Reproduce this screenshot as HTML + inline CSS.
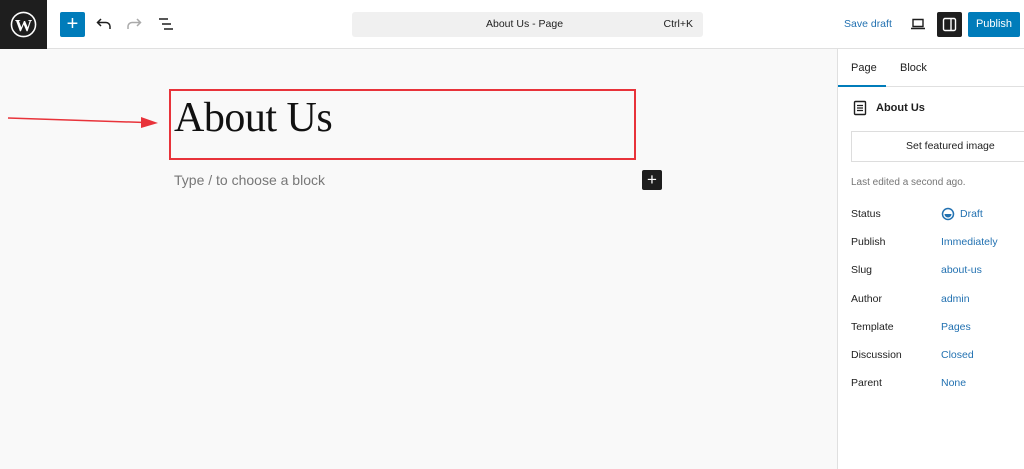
<!DOCTYPE html>
<html><head><meta charset="utf-8"><style>
*{box-sizing:border-box;margin:0;padding:0}
body{width:1024px;height:469px;overflow:hidden;background:#f9f9f9;font-family:"Liberation Sans",sans-serif;font-size:11px;color:#1e1e1e;position:relative}
.top{position:absolute;left:0;top:0;width:1024px;height:49px;background:#fff;border-bottom:1px solid #e0e0e0}
.abs{position:absolute}
.side{position:absolute;left:837px;top:49px;width:187px;height:420px;background:#fff;border-left:1px solid #e0e0e0}
.lbl{position:absolute;left:13px;font-size:10.5px;color:#1e1e1e}
.val{position:absolute;left:103px;font-size:10.5px;color:#2271b1}
</style></head><body>
<div class="top">
 <div class="abs" style="left:0;top:0;width:47px;height:49px;background:#1e1e1e">
  <svg class="abs" style="left:10px;top:11px" width="27" height="27" viewBox="0 0 28 28"><circle cx="14" cy="14" r="12.5" fill="none" stroke="#fff" stroke-width="1.6"/><text x="14" y="20.5" font-family="Liberation Serif" font-weight="bold" font-size="18" fill="#fff" text-anchor="middle">W</text></svg>
 </div>
 <div class="abs" style="left:60px;top:12px;width:25px;height:25px;background:#007cba;border-radius:2px;color:#fff;font-size:20px;line-height:24px;text-align:center">+</div>
 <svg class="abs" style="left:95px;top:15px" width="18" height="18" viewBox="0 0 18 18"><path d="M6 4L2.5 7.5L6 11M3 7.5H11a4 4 0 0 1 4 4V14" fill="none" stroke="#1e1e1e" stroke-width="1.5"/></svg>
 <svg class="abs" style="left:125px;top:15px" width="18" height="18" viewBox="0 0 18 18"><path d="M12 4L15.5 7.5L12 11M15 7.5H7a4 4 0 0 0-4 4V14" fill="none" stroke="#aaa" stroke-width="1.5"/></svg>
 <svg class="abs" style="left:157px;top:16px" width="18" height="16" viewBox="0 0 18 16"><path d="M2 3h9M5 8h9M7 13h9" stroke="#1e1e1e" stroke-width="1.5"/></svg>
 <div class="abs" style="left:352px;top:12px;width:351px;height:25px;background:#f0f0f0;border-radius:3px;font-size:10.5px;line-height:25px">
  <span class="abs" style="left:134px">About Us - Page</span><span class="abs" style="right:10px">Ctrl+K</span></div>
 <div class="abs" style="left:844px;top:18px;font-size:10.5px;color:#2271b1">Save draft</div>
 <svg class="abs" style="left:909px;top:15px" width="18" height="18" viewBox="0 0 18 18"><path d="M4 4.5h10v7H4zM2 13.5h14" fill="none" stroke="#1e1e1e" stroke-width="1.4"/></svg>
 <div class="abs" style="left:937px;top:12px;width:25px;height:25px;background:#1e1e1e;border-radius:2px">
  <svg class="abs" style="left:5px;top:5px" width="15" height="15" viewBox="0 0 15 15"><rect x="1.5" y="1.5" width="12" height="12" rx="1.5" fill="none" stroke="#fff" stroke-width="1.4"/><path d="M9 1.5v12" stroke="#fff" stroke-width="1.4"/></svg></div>
 <div class="abs" style="left:968px;top:12px;width:52px;height:25px;background:#007cba;border-radius:2px;color:#fff;font-size:11px;line-height:25px;text-align:center">Publish</div>
</div>

<svg class="abs" style="left:0;top:105px" width="170" height="30"><line x1="8" y1="13" x2="145" y2="17.5" stroke="#e8333a" stroke-width="1.5"/><polygon points="158,18 141,12 141,23" fill="#e8333a"/></svg>
<div class="abs" style="left:169px;top:89px;width:467px;height:71px;border:2px solid #e8333a"></div>
<div class="abs" style="left:174px;top:94px;font-family:'Liberation Serif',serif;font-size:42px;color:#111;letter-spacing:-0.5px">About Us</div>
<div class="abs" style="left:174px;top:172px;font-family:'Liberation Sans',sans-serif;font-size:14px;color:#777">Type / to choose a block</div>
<div class="abs" style="left:642px;top:170px;width:20px;height:20px;background:#1e1e1e;border-radius:2px;color:#fff;font-size:17px;line-height:19px;text-align:center">+</div>

<div class="side">
 <div class="abs" style="left:0;top:0;width:187px;height:38px;border-bottom:1px solid #e0e0e0"></div>
 <div class="abs" style="left:0;top:36px;width:48px;height:2px;background:#007cba"></div>
 <div class="abs" style="left:13px;top:13px;font-size:11px">Page</div>
 <div class="abs" style="left:62px;top:13px;font-size:11px">Block</div>
 <svg class="abs" style="left:15px;top:51px" width="14" height="16" viewBox="0 0 14 16"><rect x="1.5" y="1.5" width="11" height="13" rx="1" fill="none" stroke="#1e1e1e" stroke-width="1.4"/><path d="M4 5.5h6M4 8h6M4 10.5h6" stroke="#1e1e1e" stroke-width="1.2"/></svg>
 <div class="abs" style="left:38px;top:53px;font-size:11px;font-weight:bold">About Us</div>
 <div class="abs" style="left:13px;top:82px;width:180px;height:31px;border:1px solid #ddd;background:#fff;font-size:10.5px;line-height:29px;padding-left:54px">Set featured image</div>
 <div class="abs" style="left:13px;top:128px;font-size:10px;color:#757575">Last edited a second ago.</div>
 <div class="lbl" style="top:159px">Status</div>
 <svg class="abs" style="left:103px;top:158px" width="14" height="14" viewBox="0 0 14 14"><circle cx="7" cy="7" r="5.5" fill="none" stroke="#2271b1" stroke-width="1.5"/><path d="M3.5 7h7a3.5 3.5 0 0 1-7 0z" fill="#2271b1"/></svg>
 <div class="val" style="top:159px;left:122px">Draft</div>
 <div class="lbl" style="top:187px">Publish</div><div class="val" style="top:187px">Immediately</div>
 <div class="lbl" style="top:215px">Slug</div><div class="val" style="top:215px">about-us</div>
 <div class="lbl" style="top:244px">Author</div><div class="val" style="top:244px">admin</div>
 <div class="lbl" style="top:272px">Template</div><div class="val" style="top:272px">Pages</div>
 <div class="lbl" style="top:300px">Discussion</div><div class="val" style="top:300px">Closed</div>
 <div class="lbl" style="top:328px">Parent</div><div class="val" style="top:328px">None</div>
</div>
</body></html>
